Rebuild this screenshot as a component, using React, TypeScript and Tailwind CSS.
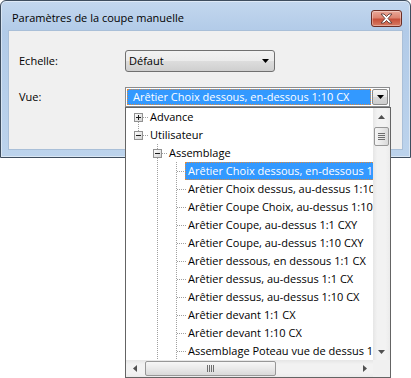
import React from "react";

type Row = {
  level: number;
  text: string;
  guides: boolean[];
  top: boolean;
  bottom: boolean;
  exp?: "+" | "-";
  selected?: boolean;
};

const items = [
  "Arêtier Choix dessous, en-dessous 1:10 CX",
  "Arêtier Choix dessus, au-dessus 1:10 CX",
  "Arêtier Coupe Choix, au-dessus 1:10 CX",
  "Arêtier Coupe, au-dessus 1:1 CXY",
  "Arêtier Coupe, au-dessus 1:10 CXY",
  "Arêtier dessous, en dessous 1:1 CX",
  "Arêtier dessus, au-dessus 1:1 CX",
  "Arêtier dessus, au-dessus 1:10 CX",
  "Arêtier devant 1:1 CX",
  "Arêtier devant 1:10 CX",
  "Assemblage Poteau vue de dessus 1:10 CX",
];

const rows: Row[] = [
  { level: 0, text: "Advance", guides: [], top: false, bottom: true, exp: "+" },
  { level: 0, text: "Utilisateur", guides: [], top: true, bottom: false, exp: "-" },
  { level: 1, text: "Assemblage", guides: [false], top: true, bottom: true, exp: "-" },
  ...items.map((text, i) => ({
    level: 2,
    text,
    guides: [false, true],
    top: true,
    bottom: true,
    selected: i === 0,
  })),
];

const dots = { stroke: "#a0a0a0", strokeDasharray: "1 1" };

const Gutter = ({ row }: { row: Row }) => (
  <svg width="19" height="18" className="shrink-0">
    {row.top && <line x1="9.5" y1="0" x2="9.5" y2="9" {...dots} />}
    {row.bottom && <line x1="9.5" y1="10" x2="9.5" y2="18" {...dots} />}
    <line x1="10" y1="9.5" x2="19" y2="9.5" {...dots} />
    {row.exp && (
      <g>
        <defs>
          <linearGradient id="exp" x1="0" y1="0" x2="1" y2="1">
            <stop offset="0" stopColor="#ffffff" />
            <stop offset="1" stopColor="#d2d2d2" />
          </linearGradient>
        </defs>
        <rect x="5.5" y="5.5" width="8" height="8" fill="url(#exp)" stroke="#919191" />
        <line x1="7" y1="9.5" x2="12" y2="9.5" stroke="#1d1d1d" />
        {row.exp === "+" && <line x1="9.5" y1="7" x2="9.5" y2="12" stroke="#1d1d1d" />}
      </g>
    )}
  </svg>
);

const Arrow = ({ dir }: { dir: "up" | "down" | "left" | "right" }) => {
  const pts = {
    up: "0,4 3.5,0 7,4",
    down: "0,0 7,0 3.5,4",
    left: "4,0 4,7 0,3.5",
    right: "0,0 4,3.5 0,7",
  }[dir];
  const vert = dir === "up" || dir === "down";
  return (
    <svg width={vert ? 7 : 4} height={vert ? 4 : 7}>
      <polygon points={pts} fill="#505050" />
    </svg>
  );
};

export default function App() {
  return (
    <div className="relative h-[378px] w-[411px] overflow-hidden bg-white font-['Open_Sans',sans-serif] text-[11px] text-black">
      {/* dialog window */}
      <div className="flex h-[158px] w-[411px] flex-col rounded-t-[6px] border border-[#3e4d5e] bg-[linear-gradient(#c3d7ee,#b2cbe8_30px,#bcd3ec)] px-[7px] pb-[7px] shadow-[inset_0_0_0_1px_rgba(255,255,255,0.45)]">
        <div className="flex h-[29px] items-start">
          <span className="mt-[9px] pl-[4px] text-[11px] leading-[16px]">Paramètres de la coupe manuelle</span>
          <div className="ml-auto mr-[1px] mt-[9px] flex h-[17px] w-[31px] items-center justify-center rounded-[3px] border border-[#6b2d24] bg-[linear-gradient(#eaa999,#dc8470_45%,#c7503a_55%,#d77c65)] shadow-[inset_0_0_0_1px_rgba(255,255,255,0.35)]">
            <svg width="13" height="11" viewBox="0 0 13 11">
              <polygon
                points="1,1 4,1 6.5,3.5 9,1 12,1 8,5.5 12,10 9,10 6.5,7.5 4,10 1,10 5,5.5"
                fill="#ffffff"
                stroke="#5b3b36"
                strokeWidth="0.9"
                strokeLinejoin="round"
              />
            </svg>
          </div>
        </div>

        <div className="flex flex-1 flex-col border border-[#a9bfd8] bg-[#f0f0f0] pl-[10px] pt-[19px]">
          <div className="flex items-center">
            <span className="w-[106px]">Echelle:</span>
            <div className="flex h-[22px] w-[150px] items-center justify-between rounded-[3px] border border-[#707070] bg-[linear-gradient(#f2f2f2,#ebebeb_50%,#dddddd_50%,#cfcfcf)] pl-[3px] pr-[5px]">
              <span>Défaut</span>
              <svg width="7" height="4">
                <polygon points="0,0 7,0 3.5,4" fill="#000000" />
              </svg>
            </div>
          </div>

          <div className="mt-[15px] flex items-center">
            <span className="w-[106px]">Vue:</span>
            <div className="flex h-[20px] w-[265px] border border-[#8b8c8e] bg-white p-[1px]">
              <div className="flex flex-1 items-center border border-dotted border-[#e08a3c] bg-[#3399ff] pl-[5px] text-white">
                Arêtier Choix dessous, en-dessous 1:10 CX
              </div>
              <div className="ml-[1px] flex w-[16px] items-center justify-center rounded-[2px] border border-[#8a8a8a] bg-[linear-gradient(#f4f4f4,#e6e6e6_50%,#d8d8d8_50%,#cdcdcd)]">
                <svg width="7" height="4">
                  <polygon points="0,0 7,0 3.5,4" fill="#000000" />
                </svg>
              </div>
            </div>
          </div>
        </div>
      </div>

      {/* dropdown tree */}
      <div className="absolute left-[125px] top-[107px] grid h-[271px] w-[266px] grid-cols-[247px_17px] grid-rows-[252px_17px] border border-[#646464] bg-white">
        <div className="overflow-hidden">
          {rows.map((row, i) => (
            <div key={i} className="flex h-[18px] items-center whitespace-nowrap pl-[3px]">
              {row.guides.map((g, j) => (
                <svg key={j} width="19" height="18" className="shrink-0">
                  {g && <line x1="9.5" y1="0" x2="9.5" y2="18" {...dots} />}
                </svg>
              ))}
              <Gutter row={row} />
              {row.selected ? (
                <span className="-ml-[1px] flex h-[18px] items-center border border-dotted border-[#e08a3c] bg-[#3399ff] pl-[2px] pr-[2px] text-white">
                  {row.text}
                </span>
              ) : (
                <span className="pl-[2px]">{row.text}</span>
              )}
            </div>
          ))}
        </div>

        {/* vertical scrollbar */}
        <div className="flex flex-col bg-[linear-gradient(90deg,#e6e6e6,#f2f2f2_25%,#f2f2f2_75%,#ebebeb)]">
          <div className="flex h-[17px] items-center justify-center">
            <Arrow dir="up" />
          </div>
          <div className="ml-[1px] mt-[2px] flex h-[19px] w-[15px] flex-col items-center justify-center gap-[1px] rounded-[2px] border border-[#979797] bg-[linear-gradient(90deg,#f6f6f6,#e9e9e9_50%,#d9d9d9)]">
            <div className="h-[1px] w-[7px] bg-[#6e6e6e]" />
            <div className="h-[1px] w-[7px] bg-[#6e6e6e]" />
            <div className="h-[1px] w-[7px] bg-[#6e6e6e]" />
            <div className="h-[1px] w-[7px] bg-[#6e6e6e]" />
          </div>
          <div className="flex-1" />
          <div className="flex h-[17px] items-center justify-center">
            <Arrow dir="down" />
          </div>
        </div>

        {/* horizontal scrollbar */}
        <div className="flex items-center bg-[linear-gradient(#e6e6e6,#f2f2f2_25%,#f2f2f2_75%,#ebebeb)]">
          <div className="flex w-[17px] justify-center">
            <Arrow dir="left" />
          </div>
          <div className="ml-[2px] flex h-[15px] w-[131px] items-center justify-center gap-[1px] rounded-[2px] border border-[#979797] bg-[linear-gradient(#f6f6f6,#e9e9e9_50%,#d9d9d9)]">
            <div className="h-[7px] w-[1px] bg-[#6e6e6e]" />
            <div className="h-[7px] w-[1px] bg-[#6e6e6e]" />
            <div className="h-[7px] w-[1px] bg-[#6e6e6e]" />
            <div className="h-[7px] w-[1px] bg-[#6e6e6e]" />
          </div>
          <div className="flex-1" />
          <div className="flex w-[17px] justify-center">
            <Arrow dir="right" />
          </div>
        </div>

        <div className="bg-[#f0f0f0]" />
      </div>
    </div>
  );
}
